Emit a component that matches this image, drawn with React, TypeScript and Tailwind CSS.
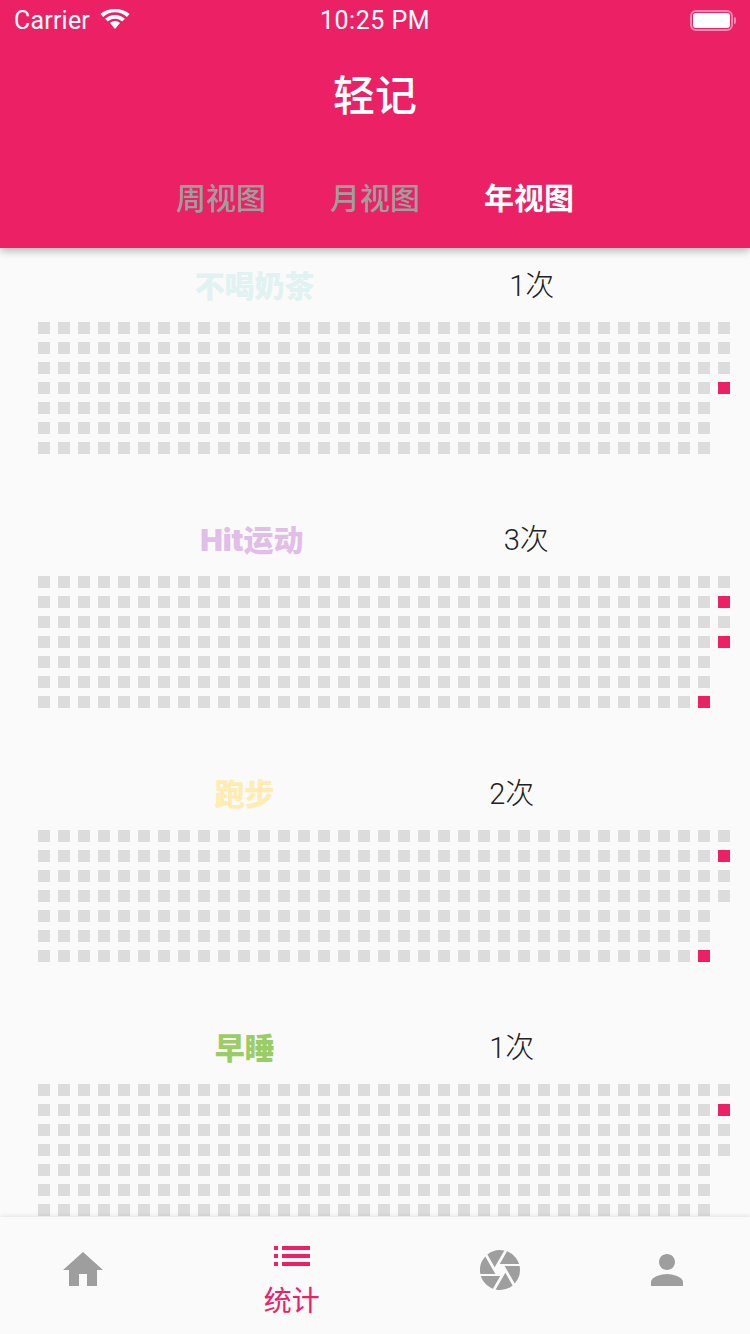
import { MdCamera, MdHome, MdList, MdPerson } from "react-icons/md"

const cjk = "font-['Roboto','Noto_Sans_CJK_SC',sans-serif]"

const records = [
  { name: "不喝奶茶", color: "text-[#e0f2f1]", count: "1次", marks: ["34-3"] },
  { name: "Hit运动", color: "text-[#e1bee7]", count: "3次", marks: ["34-1", "34-3", "33-6"] },
  { name: "跑步", color: "text-[#ffecb3]", count: "2次", marks: ["34-1", "33-6"] },
  { name: "早睡", color: "text-[#9ccc65]", count: "1次", marks: ["34-1"] },
]

// 34 full weeks and then 4 days of the current one
const cells: { key: string }[] = []
for (let col = 0; col < 35; col++) {
  const days = col === 34 ? 4 : 7
  for (let row = 0; row < days; row++) cells.push({ key: `${col}-${row}` })
}

function YearGrid({ marks }: { marks: string[] }) {
  return (
    <div className="mt-[14px] ml-[38px] grid h-[132px] w-max grid-flow-col grid-rows-7 gap-2">
      {cells.map((cell) => (
        <div
          key={cell.key}
          className={marks.includes(cell.key) ? "size-3 bg-[#ec2064]" : "size-3 bg-[#dcdcdc]"}
        />
      ))}
    </div>
  )
}

function Wifi() {
  return (
    <svg width="30" height="22" viewBox="0 0 30 22" fill="white">
      <path d="M15 3.2c4.6 0 8.8 1.8 11.900 4.700L29.600 5C25.800 1.400 20.700 0 15 0S4.200 1.400.4 5l2.700 2.900C6.200 5 10.400 3.200 15 3.200z" />
      <path d="M15 9.800c2.800 0 5.300 1.100 7.200 2.800l2.700-2.900C22.300 7.300 18.800 5.900 15 5.900S7.700 7.300 5.100 9.700l2.700 2.900c1.900-1.700 4.400-2.800 7.200-2.800z" />
      <path d="M15 12c-2 0-3.800.8-5 2l5 6 5-6c-1.200-1.200-3-2-5-2z" />
    </svg>
  )
}

function Battery() {
  return (
    <div className="flex items-center">
      <div className="flex h-[21px] w-[43px] rounded-[6px] border-2 border-[#f78bae] p-px">
        <div className="flex-1 rounded-[3px] bg-white" />
      </div>
      <div className="ml-px h-[7px] w-[2px] rounded-r-full bg-[#f78bae]" />
    </div>
  )
}

function StatusBar() {
  return (
    <div className="relative flex h-10 items-center justify-between pr-[14px] pl-[14px] text-[25px] text-white">
      <div className="flex items-center gap-[10px]">
        <span className="pt-[2px] tracking-[0.2px]">Carrier</span>
        <Wifi />
      </div>
      <span className="absolute left-[320px] pt-[2px] tracking-[0.5px]">10:25 PM</span>
      <Battery />
    </div>
  )
}

function Tab({ label, active }: { label: string; active?: boolean }) {
  return (
    <div
      className={
        active
          ? "px-[32px] text-[30px] leading-[44px] font-bold text-white"
          : "px-[32px] text-[30px] leading-[44px] font-medium text-[#9e9e9e]"
      }
    >
      {label}
    </div>
  )
}

export default function App() {
  return (
    <div className={`${cjk} flex h-[1334px] w-[750px] flex-col overflow-hidden bg-[#fafafa]`}>
      <header className="z-10 h-[248px] bg-[#ec2064] shadow-[0_3px_8px_rgba(0,0,0,0.28)]">
        <StatusBar />
        <h1 className="mt-[27px] text-center text-[42px] leading-[60px] font-medium text-white">轻记</h1>
        <div className="mt-[50px] flex justify-center">
          <Tab label="周视图" />
          <Tab label="月视图" />
          <Tab label="年视图" active />
        </div>
      </header>

      <main className="flex-1 overflow-hidden">
        {records.map((record) => (
          <section key={record.name} className="h-[254px]">
            <div className="flex h-[60px] items-end justify-evenly">
              <span className={`${record.color} font-['Inter','Noto_Sans_CJK_SC',sans-serif] text-[30px] leading-[44px] font-black`}>
                {record.name}
              </span>
              <span className="mr-px text-[29px] leading-[44px] font-light text-[#212121]">{record.count}</span>
            </div>
            <YearGrid marks={record.marks} />
          </section>
        ))}
      </main>

      <nav className="z-10 flex h-[117px] bg-[#fafafa] shadow-[0_-1px_4px_rgba(0,0,0,0.10)]">
        <div className="flex flex-1 justify-center pt-[29px]">
          <MdHome size={48} color="#9e9e9e" />
        </div>
        <div className="flex flex-[1.5] flex-col items-center pt-[15px]">
          <MdList size={48} color="#ec2064" />
          <span className="mt-[2px] text-[28px] leading-[40px] text-[#ec2064]">统计</span>
        </div>
        <div className="flex flex-1 justify-center pt-[29px]">
          <MdCamera size={48} color="#9e9e9e" />
        </div>
        <div className="flex flex-1 justify-center pt-[29px]">
          <MdPerson size={48} color="#9e9e9e" />
        </div>
      </nav>
    </div>
  )
}
